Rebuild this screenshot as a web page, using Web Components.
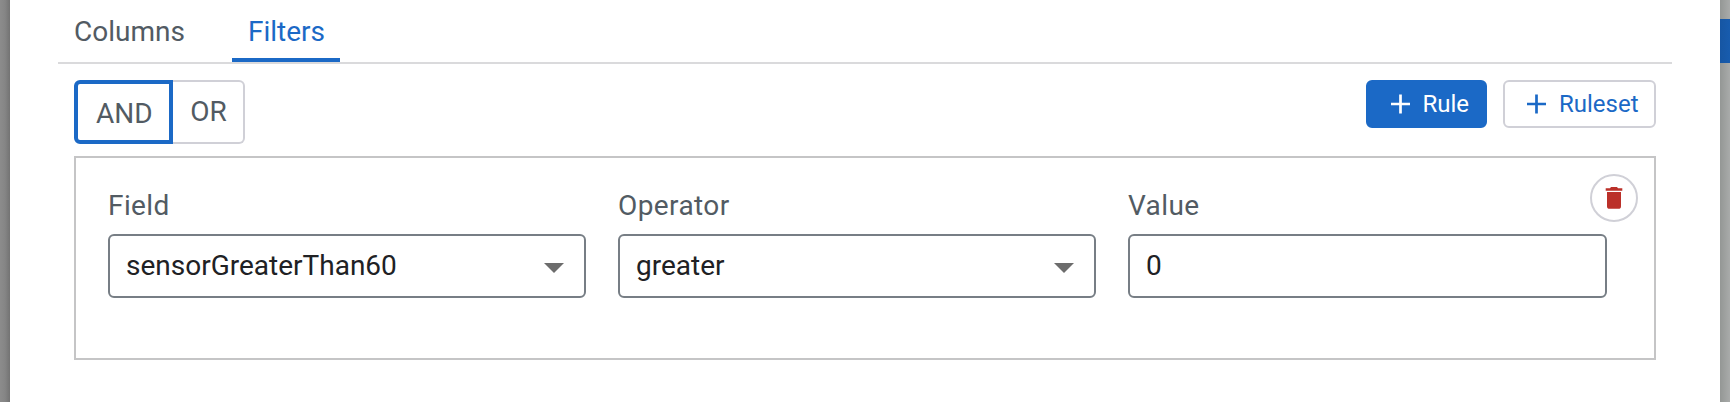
<!DOCTYPE html>
<html lang="en"><head><meta charset="utf-8"><title>Filters</title>
<style>
html,body{margin:0;height:402px;overflow:hidden;background:#fff;font-family:Roboto,"Liberation Sans",sans-serif}
</style></head><body>
<filter-dialog></filter-dialog>
<script>
const define=(name,html,setup)=>customElements.define(name,class extends HTMLElement{
  connectedCallback(){
    if(this.shadowRoot)return;
    this.attachShadow({mode:'open'}).innerHTML=html;
    if(setup)setup(this,this.shadowRoot);
  }
});

define('tab-item',`<style>
:host{display:block;box-sizing:border-box;height:62px;width:142px;padding:12px 0 0 16px;font-size:28px;line-height:40px;color:#525b63;border-bottom:4px solid transparent}
:host([selected]){width:108px;color:#1b69c6;border-color:#1b69c6}
</style><slot></slot>`);

define('tab-bar',`<style>
:host{display:flex;height:62px;border-bottom:2px solid #dadadc}
</style><slot></slot>`);

define('toggle-option',`<style>
:host{display:flex;box-sizing:border-box;height:64px;font-size:28px;line-height:32px;color:#525b63;border:2px solid #d0d0d7;border-left:0;border-radius:0 6px 6px 0;padding:14px 17px 0 17.3px;width:72px}
:host([selected]){border:4px solid #1b69c6;border-radius:6px 0 0 6px;padding:14px 0 0 18px;width:99px}
</style><slot></slot>`);

define('action-button',`<style>
:host{display:flex;align-items:center;box-sizing:border-box;height:48px;border:2px solid #d0d0d7;border-radius:6px;background:#fff;color:#1b69c6;font-size:24px;line-height:28px;padding:0 0 0 22px}
:host([primary]){background:#1b69c6;border-color:#1b69c6;color:#fff;padding-left:22.5px}
svg{display:block;width:19px;height:20px;margin-right:13px;flex:none}
</style><svg viewBox="0 0 19 20"><path d="M9.5 .5v19M0 10h19" fill="none" stroke="currentColor" stroke-width="2.7"/></svg><span><slot></slot></span>`);

define('form-field',`<style>
:host{display:block}
label{display:block;font-size:28px;line-height:32px;letter-spacing:.4px;color:#525b63;margin-bottom:12px}
.box{display:flex;align-items:center;justify-content:space-between;box-sizing:border-box;height:64px;border:2px solid #777e85;border-radius:6px;padding:0 20px 0 16px;font-size:28px;line-height:32px;color:#202124}
svg{display:none;width:20px;height:10px;margin-top:4px}
:host([select]) svg{display:block}
</style><label></label><div class="box"><span><slot></slot></span><svg viewBox="0 0 20 10"><path d="M0 0h20L10 10z" fill="#6c6c6c"/></svg></div>`,
(h,r)=>{r.querySelector('label').textContent=h.getAttribute('label')});

define('delete-button',`<style>
:host{display:grid;place-items:center;box-sizing:border-box;width:48px;height:48px;border:2px solid #d0d0d7;border-radius:50%;background:#fff}
svg{display:block;width:18px;height:22px}
</style><svg viewBox="0 0 18 22"><path d="M1 1.2H5L6 0h6l1 1.2h4.3V3.8H.7V1.2zM2 5h14v14.2q0 2.6-2.6 2.6H4.6Q2 21.8 2 19.2z" fill="#bb3029"/></svg>`);

define('filter-rule',`<style>
:host{display:grid;grid-template-columns:478px 478px 479px;column-gap:32px;align-content:start;box-sizing:border-box;height:204px;border:2px solid #c5c5c6;padding:32px 0 0 32px;position:relative}
delete-button{position:absolute;top:16px;right:16px}
</style><slot></slot><delete-button></delete-button>`);

define('filter-dialog',`<style>
:host{display:grid;grid-template-columns:10px 1710px 10px;height:402px}
.left{background:linear-gradient(90deg,#8c8c8c,#858585 50%,#737373)}
.right{background:linear-gradient(90deg,#949795,#a9abaa);display:grid;grid-template-rows:19px 44px 1fr}
.right i{grid-row:2;background:linear-gradient(90deg,#1656a3,#185cae)}
main{background:#fff;padding:0 48px}
tab-item+tab-item{margin-left:32px}
.tools{display:flex;align-items:flex-start;padding:16px 16px 12px}
.gap{flex:1}
.rule{width:121px;margin-right:16px}
.ruleset{width:153px}
filter-rule{margin:0 16px}
</style>
<div class="left"></div>
<main>
<tab-bar><tab-item>Columns</tab-item><tab-item selected>Filters</tab-item></tab-bar>
<div class="tools"><toggle-option selected>AND</toggle-option><toggle-option>OR</toggle-option><div class="gap"></div>
<action-button class="rule" primary>Rule</action-button><action-button class="ruleset">Ruleset</action-button></div>
<filter-rule><form-field label="Field" select>sensorGreaterThan60</form-field><form-field label="Operator" select>greater</form-field><form-field label="Value">0</form-field></filter-rule>
</main>
<div class="right"><i></i></div>`);
</script>
</body></html>
